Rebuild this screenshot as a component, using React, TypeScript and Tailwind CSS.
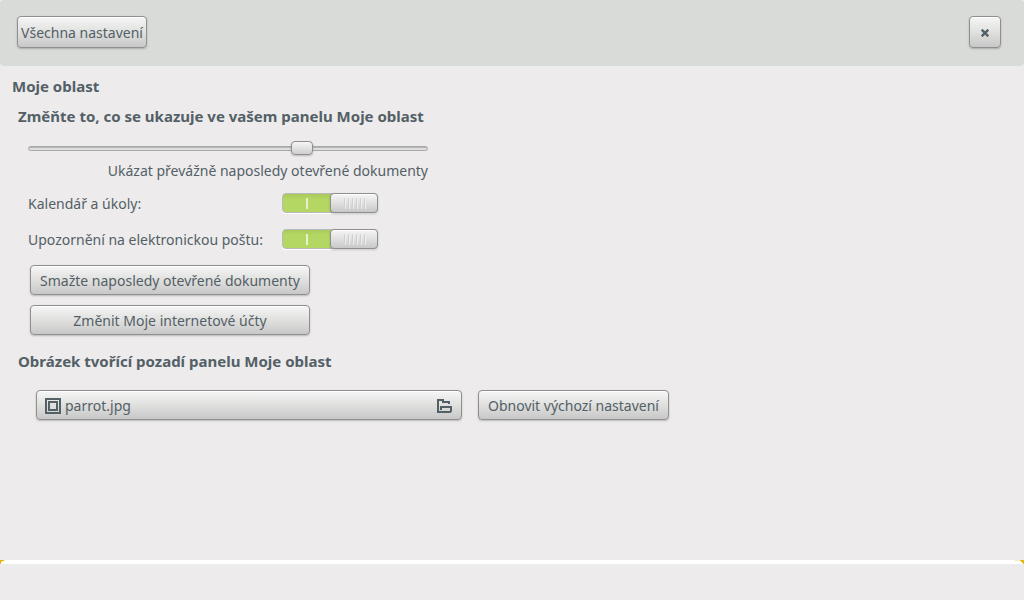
import { useState, type ReactNode } from "react";

const buttonFace =
  "rounded-[4px] border border-[#8f8f8f] bg-linear-to-b from-[#f6f6f6] via-[#e0e0df] to-[#c9c8c8] shadow-[inset_0_1px_0_#ffffff,0_1px_2px_rgba(0,0,0,0.22)]";

function Button({ className, children, label }: { className: string; children: ReactNode; label?: string }) {
  return (
    <button type="button" aria-label={label} className={`flex items-center pt-0.5 whitespace-nowrap ${buttonFace} ${className}`}>
      {children}
    </button>
  );
}

function SwitchRow({ id, label }: { id: string; label: string }) {
  const [on, setOn] = useState(true);
  return (
    <div className="flex h-5 items-center">
      <label htmlFor={id} className="w-[254px] pt-0.5 whitespace-nowrap">
        {label}
      </label>
      <span className="relative flex h-5 w-24">
        <input
          id={id}
          type="checkbox"
          role="switch"
          checked={on}
          onChange={() => setOn(!on)}
          className="peer h-5 w-24 appearance-none rounded-[4px] border border-[#b9b9b9] bg-[#d6d6d6] shadow-[0_1px_0_#ffffff] checked:bg-linear-to-b checked:from-[#a9c95d] checked:to-[#b4d763] checked:to-30%"
        />
        <span className="pointer-events-none absolute top-[5px] left-6 h-[11px] w-0.5 bg-[#e6f1cb]" />
        <span
          className={`pointer-events-none absolute top-0 left-0 flex h-5 w-12 items-center justify-center gap-[3px] peer-checked:left-12 ${buttonFace}`}
        >
          {[0, 1, 2, 3, 4, 5].map((n) => (
            <span key={n} className="h-[11px] w-px bg-[#d0d0d0] shadow-[1px_0_0_#eeeeee]" />
          ))}
        </span>
      </span>
    </div>
  );
}

export default function App() {
  const [amount, setAmount] = useState(698);
  return (
    <div className="flex min-h-screen flex-col bg-[#edebec] font-['Droid_Sans','Noto_Sans',sans-serif] text-[14px] leading-5 text-[#536066]">
      <header className="flex h-[66px] items-start justify-between rounded-[4px] bg-[#d9dbd8] pt-4 pr-[23px] pl-[17px]">
        <Button className="h-8 w-[130px] justify-center">Všechna nastavení</Button>
        <Button className="size-8 justify-center" label="Zavřít">
          <svg width="8" height="8" viewBox="0 0 8 8" fill="none" stroke="#536066" strokeWidth="2.4" aria-hidden="true">
            <path d="M.7.7 7.3 7.3M7.3.7.7 7.3" />
          </svg>
        </Button>
      </header>

      <main className="flex grow flex-col items-start pt-2.5 pl-3">
        <h1 className="text-[15px] leading-5 font-bold">Moje oblast</h1>

        <section className="mt-2.5 flex flex-col items-start pl-1.5">
          <h2 className="text-[15px] leading-5 font-bold">Změňte to, co se ukazuje ve vašem panelu Moje oblast</h2>
          <div className="mt-[15px] ml-2.5 flex w-[400px] flex-col">
            <input
              id="amount"
              type="range"
              max={1000}
              value={amount}
              onChange={(e) => setAmount(Number(e.target.value))}
              className="h-3.5 w-full appearance-none bg-transparent [&::-webkit-slider-runnable-track]:h-[5px] [&::-webkit-slider-runnable-track]:rounded-full [&::-webkit-slider-runnable-track]:border [&::-webkit-slider-runnable-track]:border-[#a9a9a9] [&::-webkit-slider-runnable-track]:bg-[#dcdddc] [&::-webkit-slider-runnable-track]:shadow-[inset_0_1px_0_#b4b4b4] [&::-webkit-slider-thumb]:-mt-[6px] [&::-webkit-slider-thumb]:h-3.5 [&::-webkit-slider-thumb]:w-[22px] [&::-webkit-slider-thumb]:appearance-none [&::-webkit-slider-thumb]:rounded-[4px] [&::-webkit-slider-thumb]:border [&::-webkit-slider-thumb]:border-[#8f8f8f] [&::-webkit-slider-thumb]:bg-linear-to-b [&::-webkit-slider-thumb]:from-[#f6f6f6] [&::-webkit-slider-thumb]:to-[#cfcfcf] [&::-webkit-slider-thumb]:shadow-[0_1px_2px_rgba(0,0,0,0.22)]"
            />
            <label htmlFor="amount" className="mt-1.5 self-end whitespace-nowrap">
              Ukázat převážně naposledy otevřené dokumenty
            </label>
          </div>
          <div className="mt-3 ml-2.5 flex flex-col gap-4">
            <SwitchRow id="calendar" label="Kalendář a úkoly:" />
            <SwitchRow id="mail" label="Upozornění na elektronickou poštu:" />
          </div>
          <div className="mt-4 ml-3 flex w-[280px] flex-col gap-2.5">
            <Button className="h-[30px] justify-center">Smažte naposledy otevřené dokumenty</Button>
            <Button className="h-[30px] justify-center">Změnit Moje internetové účty</Button>
          </div>
        </section>

        <section className="mt-4 flex flex-col items-start pl-1.5">
          <h2 className="text-[15px] leading-5 font-bold">Obrázek tvořící pozadí panelu Moje oblast</h2>
          <div className="mt-[19px] ml-[18px] flex gap-4">
            <Button className="h-[30px] w-[426px] gap-1 px-2">
              <svg width="16" height="16" viewBox="0 0 16 16" fill="none" stroke="#536066" strokeWidth="2" aria-hidden="true">
                <path d="M1 1h14v14H1zM4 4h8v8H4z" />
              </svg>
              <span className="grow text-left">parrot.jpg</span>
              <svg width="16" height="16" viewBox="0 0 16 16" fill="none" stroke="#536066" strokeWidth="2" aria-hidden="true">
                <path d="M4 12V9h10v4l-1 1H1V2h5v2h6v2" />
              </svg>
            </Button>
            <Button className="h-[30px] w-[191px] justify-center">Obnovit výchozí nastavení</Button>
          </div>
        </section>
      </main>

      <footer>
        <svg className="h-1 w-full" preserveAspectRatio="none" viewBox="0 0 1024 4" shapeRendering="crispEdges" aria-hidden="true">
          <path d="M0 0h1024v4H0z" fill="#ffffff" />
          <path d="M3 0h2v1H3zM1019 0h-4v1h4z" fill="#f6e7ac" />
          <path d="M0 0h4v1H2v1H1v2H0zM1024 0h-4v1h1v1h1v1h1v1h1z" fill="#e3b90f" />
        </svg>
        <div className="h-9" />
      </footer>
    </div>
  );
}
